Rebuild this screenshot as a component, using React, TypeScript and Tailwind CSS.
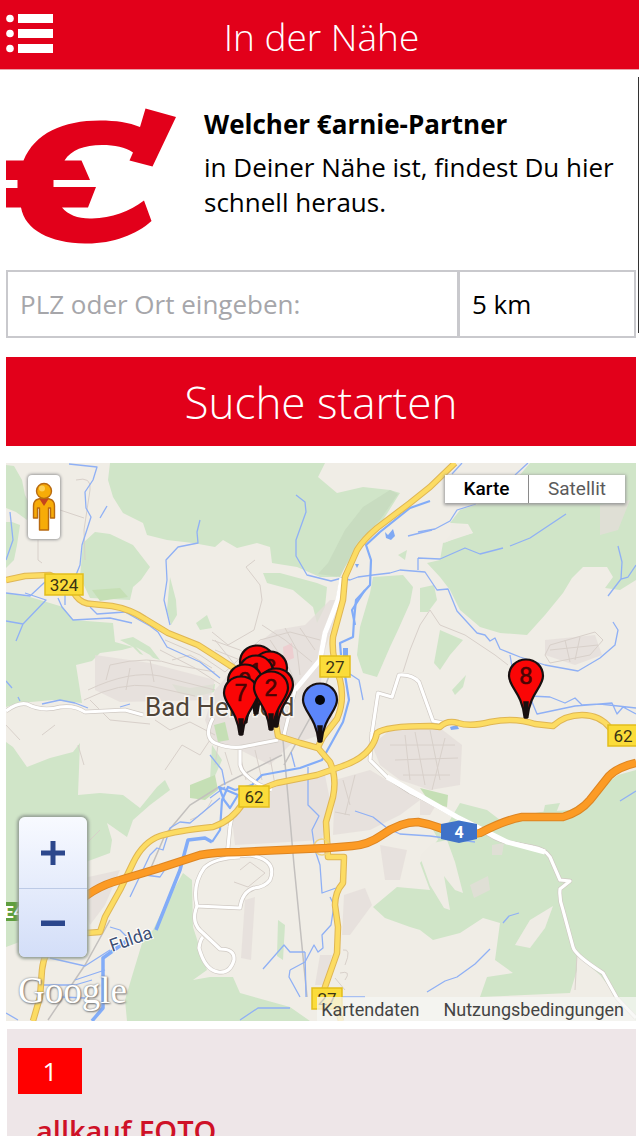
import React from "react";

const forests = [
  "6,465 14,466 22,480 25,495 30,505 27,520 16,512 6,508",
  "12,522 20,525 17,545 14,560 6,568 6,522",
  "110,463 108,480 113,497 123,513 143,523 147,535 167,540 193,543 215,547 223,540 237,548 257,543 270,547 272,563 297,567 320,577 337,577 350,560 367,537 383,520 400,493 390,490 363,487 337,493 318,477 325,463",
  "263,573 280,573 317,583 327,587 325,607 317,623 313,607 293,590 267,583",
  "95,532 110,534 133,545 150,567 141,580 133,587 130,600 90,598 80,577 83,543",
  "6,593 30,597 63,607 73,620 113,623 115,642 133,647 122,650 100,653 92,661 76,665 82,703 53,700 20,703 6,707",
  "120,640 133,637 150,647 160,660 140,654 133,647",
  "6,742 13,747 27,767 50,758 73,752 80,743 78,795 100,793 123,795 140,808 157,787 165,780 170,790 150,805 133,820 127,837 107,823 112,840 110,853 83,863 60,880 47,947 25,940 6,947",
  "183,873 192,880 193,927 207,970 193,980 210,977 233,977 240,993 290,1007 310,1021 127,1021 125,1000 133,973 143,940 153,930 165,905",
  "530,463 636,463 636,580 620,590 605,588 613,577 607,567 583,567 572,578 563,593 545,615 527,635 500,633 480,627 460,610 450,590 440,577 427,563 440,560 443,543 473,533 468,524 450,523 460,510 490,500 513,483",
  "373,577 403,575 413,587 410,603 398,630 390,647 377,677 363,673 357,655 360,627 370,593",
  "440,630 463,640 450,655 440,670 434,663",
  "420,588 434,585 437,600 428,612 420,612",
  "460,803 487,810 500,820 540,812 570,810 587,800 607,783 618,775 636,770 636,1021 628,1010 617,997 600,975 577,955 577,970 570,993 480,997 487,977 513,973 495,960 500,923 483,918 460,933 433,940 420,930 410,927 385,918 373,907 397,887 430,890 420,863 440,837",
  "448,858 432,828 465,835 477,852",
  "170,577 176,600 177,615 171,625 167,610",
  "196,623 207,615 212,628 200,630",
  "172,684 190,688 215,684 214,692 196,697 178,693",
  "452,690 466,675 463,687 455,695",
  "212,745 222,760 214,778 210,780",
  "278,920 285,925 283,960 277,956",
  "545,805 560,803 556,813 543,814",
  "398,555 407,550 405,560",
];

const clearings = [
  "420,857 433,843 447,840 455,862 463,893 455,890 447,880 444,876 450,910 444,908 430,885",
  "515,945 530,920 553,906 545,928 530,948",
  "450,523 463,525 473,533 458,537 444,543 452,532",
  "136,647 150,655 156,661 148,660",
];

const towns = [
  "215,690 250,650 275,630 305,625 330,600 340,600 325,650 320,690 335,720 320,735 290,745 270,765 240,750 215,745 205,720",
  "245,800 280,785 325,775 330,800 322,840 235,845 232,820",
  "390,730 440,728 462,745 460,785 430,790 400,780 380,765 372,745",
  "335,780 370,770 420,800 400,815 370,830 333,835",
  "380,845 407,850 400,880 385,880",
  "545,640 595,635 602,655 575,665 545,655",
  "600,505 630,500 618,530 600,535",
  "344,895 365,888 372,905 350,935 342,935",
  "95,655 150,663 215,680 210,700 120,702 95,690",
  "320,955 332,955 325,985 315,985",
  "420,800 436,805 430,815 420,815",
  "492,845 504,843 502,855 492,855",
  "470,885 488,876 490,890 474,898",
  "75,880 120,870 105,905 90,925",
  "245,900 255,897 251,960 241,958",
];

const greens = [
  "190,785 215,775 218,790 205,800 190,798",
  "420,788 448,795 447,807 430,803",
  "214,725 225,722 229,740 218,742",
  "92,590 120,588 128,597 100,601",
];

const lanes = [
  "M76 480 Q92 476 90 490 L84 530 L85 560",
  "M60 510 L84 518",
  "M38 540 L38 560 L42 563",
  "M165 640 L200 655 L225 672",
  "M160 650 L195 668 L220 684",
  "M110 665 Q150 655 175 665 L215 672",
  "M88 690 Q130 670 160 676 L215 690",
  "M84 700 Q120 682 150 686 L195 696",
  "M110 665 L106 680 M150 660 L154 682 M130 668 L126 690",
  "M255 560 L246 567 L260 585 L262 600 L254 630 L228 645 L212 632",
  "M212 640 L240 650 L255 660 M215 650 L245 662 M225 672 L260 640 L290 632 L320 640",
  "M285 628 L297 650 L300 675 M270 640 L290 670 L298 690 M300 628 L315 650",
  "M262 625 L285 640 L312 662",
  "M430 610 L440 625 L465 635 L495 655 L508 665",
  "M545 655 L550 645 L595 632 L603 640 L590 655 L550 663 Z M565 640 L570 662 M580 637 L575 660 M550 650 L598 645",
  "M405 735 L410 780 M415 732 L425 785 M430 730 L440 780 M445 738 L432 790 M390 745 L455 745 M395 760 L458 758 M403 775 L450 775",
  "M172 660 L190 655 L212 668",
  "M155 720 L170 730 L190 722 L215 735 M165 770 L182 745 L200 755 L210 740",
  "M78 745 L84 765 M90 700 L110 720 L150 724",
  "M6 725 L20 740 M42 735 L55 725",
  "M212 800 Q205 815 190 820 M215 640 L235 665",
  "M240 870 L250 862 L265 873 L248 887 L234 882",
  "M343 950 Q352 948 345 965 M345 980 Q352 970 340 973 M335 978 L345 990",
  "M240 755 L246 780 M255 750 L262 780 M270 757 L275 785",
  "M218 745 L215 765 M225 752 L232 775",
  "M343 780 L350 805 M355 775 L345 815 M335 812 L350 815",
  "M100 830 L60 870 M575 990 L577 955",
  "M410 650 L420 625 L430 610 M403 672 L410 650",
];

const streams = [
  "M69 464 L97 467 L93 480 L85 492 L86 508 L91 517 L82 545 L80 565 L76 575",
  "M100 518 L107 506",
  "M10 512 L13 540 L6 560",
  "M200 520 L197 532 L198 543 L178 547 L166 560 L167 580 L164 600 L170 625",
  "M6 593 L30 596 L45 582 M6 621 L23 624 L46 600 L25 593 M23 624 L16 641",
  "M58 598 L62 607 L73 620 L110 618 L132 623 M90 607 L97 614 L125 612 L150 626 L158 632 L167 647 L200 662 L220 678 M65 590 L65 605",
  "M296 495 L305 502 L306 512 L296 540 L296 556 L307 575 L331 581 L342 578 L350 580 L358 577 L373 575 L390 573 L400 570 L425 572 L437 590 L448 589 L457 611 L477 633 L485 635 L490 641 L495 638 L500 649 L520 657 L545 665 L578 671 L600 658 L615 645 L618 630 L613 622",
  "M6 681 L12 688 M18 697 L20 701 M42 704 L60 700 L75 703 L88 708 M120 707 L130 704",
  "M510 655 L513 672 L530 696 L550 697 L565 703 L575 698 L582 705 L600 704 L636 708 M530 697 L537 714 L575 706 L612 703 L617 714 L623 707 L636 714",
  "M418 558 L440 559 L465 548 L480 554 L503 548 M510 546 L530 538 L566 514 M418 558 L418 570",
  "M418 532 L435 529 L450 521 L457 510 L476 504",
  "M408 536 L432 530",
  "M618 546 L622 562 L621 579 L608 596 M621 579 L628 577 L636 565",
  "M452 474 L462 463 M515 475 L528 463",
  "M291 752 L295 767 M308 767 L308 805 L319 816 L312 830 L315 850 L320 865 L322 893 L336 888",
  "M330 897 L334 905 L331 925 L322 935 L323 948 L318 952 L314 945 L305 962 L290 970 M263 969 L284 945 L290 952 L305 952",
  "M290 970 L289 977 L300 997 M305 952 L306 997",
  "M240 1020 L258 1008 L290 1008",
  "M355 811 L373 817 L387 828 L400 834 L430 836 L475 842",
  "M427 992 L445 981 L457 977 L475 964 L490 949",
  "M503 923 L509 916 L519 913",
  "M620 801 L636 791",
  "M110 927 L120 930 L130 940 M50 958 L85 966 L110 950 M75 980 L90 975 L105 970",
  "M130 897 L150 855 L157 848 L163 850 L170 828 L180 822 L190 823 L220 798 M145 875 L160 877 L166 868",
  "M6 1013 L18 1020 M210 755 L222 770 L225 785 M40 985 L75 985 L92 980 M60 997 L85 998",
  "M350 674 L359 680 L363 700",
  "M210 798 L225 787 M330 997 L365 997",
];

const rivers = [
  "M430 501 L410 508 L380 532 L366 545 L371 560 L370 585 L356 600 L354 620 L353 637 L340 643 L341 655",
  "M365 590 L352 610 L355 625",
  "M345 675 L349 700 L343 722 L332 742 L322 760 L300 768 L262 775 L252 785 L235 790 L228 787 L222 800 L220 830 L212 842",
  "M219 787 L238 795 L230 808 L224 800 Z",
];

const fulda = [
  "M212 842 L205 838 L188 840 L180 870 L170 895 L156 930",
  "M128 940 L103 958 L103 1008 L92 1021",
];

const whiteRoads = [
  "M6 711 Q18 702 27 704 Q42 712 60 707 Q75 705 85 712 L125 710 L143 715",
  "M213 718 Q203 737 215 743 Q232 750 247 746 L278 740",
  "M240 750 L240 765 Q242 775 260 785 L272 790",
  "M342 578 L338 600 L325 633 L320 660 L295 690 L284 735",
  "M372 732 L370 760 L387 777 L410 792 L430 802 L457 817 L480 828 Q495 840 507 842 L533 847 Q545 849 550 857 L560 880 L570 881 L560 889 Q559 900 563 910 L573 947 Q575 955 603 973 L617 998 L636 1018",
  "M372 733 L378 693 L392 697 L399 675 Q412 674 419 682 L433 721 L443 723",
  "M243 803 Q231 812 230 827 L227 857 L250 855 Q278 860 270 880 Q265 887 254 888 Q242 892 240 908 L197 906 Q192 885 204 868 Q214 858 240 857",
  "M197 906 Q190 923 203 933 L220 949 Q235 949 234 960 Q230 974 218 972 Q205 970 199 948 Q200 940 203 937",
];

const yellowRoads = [
  "M6 580 L25 576 L50 575 Q68 582 76 596 Q82 604 92 604 L112 606 Q130 609 145 619 L168 633 L198 645 L220 659 L240 672",
  "M455 463 L430 487 L410 503 L377 528 Q363 540 357 550 L345 577 L343 600 L333 637 Q331 655 340 680 Q345 700 337 719 L323 737 L318 747",
  "M33 1021 L40 997 L42 970 Q44 950 60 935 L100 932 L105 917 L120 890 L133 863 Q143 842 160 836 Q175 831 213 827 Q233 820 243 803 Q260 788 277 783 L317 775 L340 767 Q372 757 377 733 Q385 726 430 726 L440 727 Q447 720 458 723 Q470 727 490 722 Q515 717 535 724 L553 726 Q565 715 582 715 Q600 715 610 728 L636 735",
  "M272 700 L278 736 L300 743 L318 748 L330 762 Q337 778 333 797 L326 822 L328 857 L344 857 L343 883 Q335 892 335 905 L338 927 L337 953 L325 987 L320 1005",
  "M338 1010 L341 1021",
];

const motorway =
  "M70 910 Q92 887 120 880 L160 868 L200 855 Q215 852 240 852 L327 848 L352 846 Q368 845 382 835 Q400 822 418 822 Q430 824 440 828 Q460 838 480 833 Q505 820 522 817 Q550 817 563 817 Q580 812 590 800 L609 776 Q618 767 636 763";

function Pin({ x, y, home = false, label = "" }: { x: number; y: number; home?: boolean; label?: string }) {
  return (
    <g transform={`translate(${x} ${y})`}>
      <path
        d="M0 -16.500 C-10 -16.500 -17 -9 -17 0 C-17 11 -4 17 -1.500 41 L1.500 41 C4 17 17 11 17 0 C17 -9 10 -16.500 0 -16.500 Z"
        fill={home ? "#5c86fb" : "#fa0606"}
        stroke="#181010"
        strokeWidth="2.200"
      />
      <path d="M-2 26 L-1 42 L1 42 L2 26 Z" fill="#181010" stroke="#181010" strokeWidth="1.500" />
      {home && <circle r="5" fill="#05060d" />}
      {label !== "" && (
        <text
          y="8"
          textAnchor="middle"
          fontSize="23"
          fill="#4a0404"
          stroke="#4a0404"
          strokeWidth="0.600"
          className="font-['Liberation_Sans',sans-serif]"
        >
          {label}
        </text>
      )}
    </g>
  );
}

function Shield({ x, y, w, label }: { x: number; y: number; w: number; label: string }) {
  return (
    <g>
      <rect x={x} y={y} width={w} height="21" fill="#fbdc3a" stroke="#e2bd1c" strokeWidth="1.500" />
      <text x={x + w / 2} y={y + 17} textAnchor="middle" fontSize="17" fill="#3a3314">
        {label}
      </text>
    </g>
  );
}

function MapDrawing() {
  return (
    <svg
      viewBox="6 463 630 558"
      preserveAspectRatio="xMidYMid slice"
      className="block h-full w-full font-['Roboto',sans-serif]"
      role="img"
      aria-label="Karte von Bad Hersfeld"
    >
      <rect x="-400" y="200" width="1500" height="1100" fill="#f0ede6" />
      <g fill="#d0e5c8">
        {forests.map((p) => <polygon key={p} points={p} />)}
      </g>
      <polygon points="328,563 345,530 363,507 390,490 398,494 380,520 357,543 340,577 318,574" fill="#c8dcc0" />
      <g fill="#efece5">
        {clearings.map((p) => <polygon key={p} points={p} />)}
      </g>
      <g fill="#e5deda" opacity="0.75">
        {towns.map((p) => <polygon key={p} points={p} />)}
      </g>
      <g fill="#c5dfb5">
        {greens.map((p) => <polygon key={p} points={p} />)}
      </g>
      <polygon points="283,647 292,643 294,658 284,662" fill="#edced0" />
      <g fill="none" stroke="#d8d0ca" strokeWidth="1">
        {lanes.map((d) => <path key={d} d={d} />)}
      </g>
      <path d="M283 740 L294 865 L307 997 M335 660 L320 700 L284 765 M150 870 L165 835 L190 805 L222 785 L282 755 M110 920 L85 965 L48 1020" fill="none" stroke="#c3c0be" strokeWidth="1.500" />
      <g fill="none" stroke="#8fb0f5" strokeWidth="1.300" strokeLinejoin="round">
        {streams.map((d) => <path key={d} d={d} />)}
      </g>
      <g fill="none" stroke="#82acf8" strokeWidth="2.200" strokeLinejoin="round">
        {rivers.map((d) => <path key={d} d={d} />)}
        {fulda.map((d) => <path key={d} d={d} strokeWidth="3.500" />)}
      </g>
      <path d="M385 532 L388 535 L393 529 L395 536 L391 540 L386 538 Z M343 648 L348 648 L348 656 L343 656 Z M355 564 L359 564 L357 568 Z M450 727 L457 725 L459 729 L451 730 Z" fill="#7fa9f3" />
      <g fill="none" strokeLinejoin="round">
        {whiteRoads.map((d) => <path key={d} d={d} stroke="#cfc9c3" strokeWidth="4.500" />)}
        {whiteRoads.map((d) => <path key={d} d={d} stroke="#ffffff" strokeWidth="3.200" />)}
        <path d="M342 578 L338 600 L325 633 L320 660 L295 690 M387 777 L457 817 L507 842 L545 852" stroke="#ffffff" strokeWidth="5" />
        {yellowRoads.map((d) => <path key={d} d={d} stroke="#dfb654" strokeWidth="6.500" />)}
        {yellowRoads.map((d) => <path key={d} d={d} stroke="#fcdc63" strokeWidth="4.500" />)}
        <circle cx="322" cy="847" r="8" stroke="#edd283" strokeWidth="1.500" />
        <path d={motorway} stroke="#dd8522" strokeWidth="8.500" />
        <path d={motorway} stroke="#fc9b25" strokeWidth="6.500" />
      </g>
      <Shield x={45} y={574} w={38} label="324" />
      <Shield x={320} y={656} w={30} label="27" />
      <Shield x={239} y={786} w={30} label="62" />
      <Shield x={608} y={725} w={30} label="62" />
      <Shield x={312} y={988} w={30} label="27" />
      <path d="M441 824 L459 820.500 L477 824 L477 839 L459 843 L441 839 Z" fill="#3f72c8" />
      <text x="459" y="838" textAnchor="middle" fontSize="16" fontWeight="700" fill="#ffffff">4</text>
      <rect x="2" y="902" width="26" height="19" fill="#5f9e3e" />
      <text x="4" y="918" fontSize="17" fontWeight="700" fill="#ffffff">E4</text>
      <text
        transform="translate(112 952) rotate(-19)"
        fontSize="18"
        fill="#3d4f75"
        stroke="#ffffff"
        strokeWidth="2"
        paintOrder="stroke"
      >
        Fulda
      </text>
      <text x="145" y="716" fontSize="26" fill="#504538" stroke="#f8f6f2" strokeWidth="3" paintOrder="stroke">
        Bad Hersfeld
      </text>
      <Pin x={257} y={662} />
      <Pin x={270} y={668} label="3" />
      <Pin x={256} y={672} label="1" />
      <Pin x={276} y={685} />
      <Pin x={245} y={681} label="9" />
      <Pin x={241} y={693} label="7" />
      <Pin x={271} y={688} label="2" />
      <Pin x={320} y={700} home />
      <Pin x={526} y={676} label="8" />
    </svg>
  );
}

function Pegman() {
  return (
    <svg viewBox="0 0 24 50" className="h-[50px] w-6" aria-hidden="true">
      <path
        d="M4 18 Q12 14 20 18 Q22.500 20 22.500 24 L22.500 36 L18.500 36 L18.500 26 L16.500 26 L16.500 48 L7.500 48 L7.500 26 L5.500 26 L5.500 36 L1.500 36 L1.500 24 Q1.500 20 4 18 Z"
        fill="#f7ac08"
        stroke="#b86a10"
        strokeWidth="1.400"
        strokeLinejoin="round"
      />
      <path d="M7.500 17 L16.500 17 L12 24 Z" fill="#c4451c" />
      <circle cx="12" cy="9" r="7.500" fill="#f7ac08" stroke="#b86a10" strokeWidth="1.400" />
      <circle cx="10" cy="6.500" r="3" fill="#fdcf55" />
    </svg>
  );
}

function EuroLogo() {
  return (
    <svg viewBox="0 0 170 136" className="h-[136px] w-[170px]" role="img" aria-label="Carnie">
      <path
        d="M0 52.500 L17.500 52.500 C29 25 57 12.500 94 12.500 C110 12.500 123 14.500 134 19 L139.500 0.500 L170 9 L146.500 58.500 L123.500 52.500 L127 44.500 C119 39 109 37 96 37 C78 37 65 42 58.500 52.500 L75.500 52.500 L84 72 L47.500 72 L47.500 79 L90 79 L82 99.500 L56 99.500 C62 107 73 111 86 110.500 C106 110 123 103.500 138 92.500 L145.500 113 C130 127 106 136 79 135.500 C44 135 19 122 15 99.500 L0 99.500 L0 80 L11.500 80 L11.500 72 L0 72 Z"
        fill="#e2001a"
      />
    </svg>
  );
}

export default function App() {
  return (
    <div className="relative flex h-screen flex-col overflow-hidden bg-white font-['Open_Sans',sans-serif] text-black">
      <header className="relative flex h-[70px] shrink-0 items-center justify-center border-b border-[#e9a0a8] bg-[#e2001a] pt-1 pl-1">
        <button type="button" aria-label="Menü" className="absolute top-3 left-1.5">
          <svg viewBox="0 0 48 44" className="h-11 w-12" fill="#ffffff" aria-hidden="true">
            <circle cx="4" cy="6.500" r="3.800" />
            <circle cx="4" cy="21.500" r="3.800" />
            <circle cx="4" cy="36.500" r="3.800" />
            <rect x="12" y="2" width="35" height="9" />
            <rect x="12" y="17" width="35" height="9" />
            <rect x="12" y="32" width="35" height="9" />
          </svg>
        </button>
        <h1 className="text-[37px] leading-[50px] font-light text-white">In der Nähe</h1>
      </header>

      <main className="flex-1 overflow-y-auto pr-[3px] pl-1.5 [scrollbar-width:none]">
        <section className="flex h-[200px] items-start pt-[37px]">
          <div className="w-[198px] shrink-0 pt-px">
            <EuroLogo />
          </div>
          <div>
            <h2 className="text-[26px] leading-[34px] font-bold">Welcher €arnie-Partner</h2>
            <p className="pt-[9px] text-[26px] leading-[35px]">in Deiner Nähe ist, findest Du hier schnell heraus.</p>
          </div>
        </section>

        <form onSubmit={(e) => e.preventDefault()}>
          <div className="grid h-[68px] grid-cols-[453fr_177fr]">
            <input
              type="text"
              aria-label="PLZ oder Ort"
              placeholder="PLZ oder Ort eingeben:"
              className="min-w-0 border-2 border-[#c9c9cd] bg-white px-3 text-[26px] placeholder:text-[#a6a6aa] placeholder:opacity-100"
            />
            <select
              aria-label="Umkreis"
              className="min-w-0 appearance-none border-2 border-l border-[#c9c9cd] bg-white px-3 text-[26px]"
            >
              <option>5 km</option>
              <option>10 km</option>
              <option>20 km</option>
            </select>
          </div>
          <button type="submit" className="mt-[19px] flex h-[89px] w-full items-center justify-center bg-[#e2001a] text-[44px] font-light text-white">
            Suche starten
          </button>
        </form>

        <section className="relative mt-[17px] h-[558px] overflow-hidden font-['Roboto',sans-serif]">
          <MapDrawing />
          <button
            type="button"
            aria-label="Street View"
            className="absolute top-3 left-[22px] flex h-16 w-8 items-center justify-center rounded bg-white shadow-[0_0_3px_1px_#9a9a9a]"
          >
            <Pegman />
          </button>
          <div className="absolute top-3 right-[11px] flex h-7 bg-white text-[19px] shadow-[0_1px_3px_1px_#9a9a9a]">
            <button type="button" className="w-[84px] border-r border-[#8a8a8a] font-medium">Karte</button>
            <button type="button" className="w-24 text-[#5a5a5a]">Satellit</button>
          </div>
          <div className="absolute bottom-16 left-[13px] flex h-[140px] w-[68px] flex-col overflow-hidden rounded-md bg-linear-to-b from-[#f8faff] to-[#d3def8] shadow-[0_0_3px_2px_#96a096]">
            <button type="button" aria-label="Vergrößern" className="flex h-[72px] items-center justify-center border-b border-[#bccae6]">
              <svg viewBox="0 0 24 24" className="h-6 w-6" fill="#2c478c" aria-hidden="true">
                <path d="M9.500 0 H14.500 V9.500 H24 V14.500 H14.500 V24 H9.500 V14.500 H0 V9.500 H9.500 Z" />
              </svg>
            </button>
            <button type="button" aria-label="Verkleinern" className="flex flex-1 items-center justify-center">
              <svg viewBox="0 0 24 24" className="h-6 w-6" fill="#2c478c" aria-hidden="true">
                <path d="M0 9.500 H24 V15 H0 Z" />
              </svg>
            </button>
          </div>
          <span className="absolute bottom-2 left-3 font-['Liberation_Serif',serif] text-[37px] leading-[44px] text-white [text-shadow:0_0_2px_#777,1px_1px_2px_#777]">
            Google
          </span>
          <div className="absolute right-0 bottom-0 flex h-6 items-center gap-6 bg-[#f5f5f3]/75 pr-3 pl-1 text-[18px] text-[#444444]">
            <a href="#kartendaten">Kartendaten</a>
            <a href="#nutzung">Nutzungsbedingungen</a>
          </div>
        </section>

        <article className="mt-2 ml-px bg-[#eee6e8] px-[11px] pt-[19px] pb-6">
          <div className="flex h-[46px] w-16 items-center justify-center bg-[#ff0000] text-[26px] text-white">1</div>
          <h3 className="pt-[18px] pl-[18px] text-[29px] leading-[38px] font-semibold text-[#cf1127]">allkauf FOTO</h3>
        </article>
      </main>
      <div className="absolute top-[77px] right-0 h-64 w-px bg-[#333333]" aria-hidden="true" />
    </div>
  );
}
